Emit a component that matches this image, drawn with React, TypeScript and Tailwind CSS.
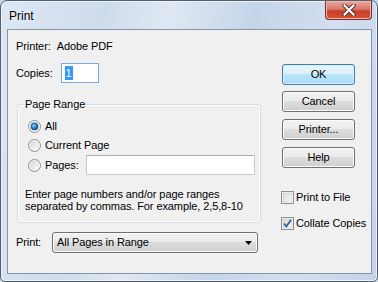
const btn =
  "flex h-[21px] w-[73px] items-center justify-center rounded-[3px] border border-[#707070] bg-[linear-gradient(#f2f2f2_0%,#ebebeb_45%,#dddddd_50%,#cfcfcf_100%)] shadow-[inset_0_0_0_1px_#fcfcfc] text-black";

function Radio({ checked }: { checked?: boolean }) {
  return (
    <svg width="13" height="13" viewBox="0 0 13 13" className="shrink-0">
      <defs>
        <linearGradient id="rbg" x1="0" y1="0" x2="1" y2="1">
          <stop offset="0" stopColor="#d4d4d4" />
          <stop offset="1" stopColor="#fcfcfc" />
        </linearGradient>
        <radialGradient id="rdot" cx="0.4" cy="0.35" r="0.7">
          <stop offset="0" stopColor="#8fd0f5" />
          <stop offset="0.55" stopColor="#2a7cc0" />
          <stop offset="1" stopColor="#0d3f75" />
        </radialGradient>
      </defs>
      <circle cx="6.5" cy="6.5" r="6" fill="#f4f4f4" stroke="#8e8f8f" />
      <circle cx="6.5" cy="6.5" r="4.5" fill="url(#rbg)" />
      {checked && <circle cx="6.5" cy="6.5" r="3.5" fill="url(#rdot)" stroke="#1c4f82" strokeWidth="0.8" />}
    </svg>
  );
}

function Check({ checked }: { checked?: boolean }) {
  return (
    <svg width="13" height="13" viewBox="0 0 13 13" className="shrink-0">
      <defs>
        <linearGradient id="cbg" x1="0" y1="0" x2="1" y2="1">
          <stop offset="0" stopColor="#d8d8d8" />
          <stop offset="1" stopColor="#f8f8f8" />
        </linearGradient>
      </defs>
      <rect x="0.5" y="0.5" width="12" height="12" fill="#fff" stroke="#8f8f8f" />
      <rect x="2" y="2" width="9" height="9" fill="url(#cbg)" stroke="#c2c2c2" strokeWidth="0.6" />
      {checked && (
        <path d="M3 6.5 L5.3 9.5 L10 2.8" fill="none" stroke="#3a5aa0" strokeWidth="1.8" strokeLinejoin="round" />
      )}
    </svg>
  );
}

export default function App() {
  return (
    <div className="h-[282px] w-[378px] bg-[#c9d7e8] font-['Liberation_Sans',Arial,sans-serif] text-[11px] leading-[13px] tracking-[-0.1px] text-black">
      <div className="flex h-full w-full flex-col rounded-t-[7px] rounded-b-[5px] border border-[#56606d] bg-[linear-gradient(100deg,#dce7f4_0%,#cfdcec_25%,#dfe8f3_40%,#c5d5e8_60%,#d3dff0_80%,#c4d4e7_100%)] shadow-[inset_0_0_0_1px_#e9f0f8]">
        <div className="flex h-[28px] shrink-0 items-start justify-between">
          <span className="mt-[8px] ml-[8px] text-[12px] leading-[14px] tracking-normal [text-shadow:0_0_6px_#ffffff]">
            Print
          </span>
          <div className="mr-[5px] flex h-[19px] w-[47px] items-center justify-center rounded-b-[4px] border border-t-0 border-[#7a2d24] bg-[linear-gradient(#e9a99a_0%,#d9786a_45%,#c7402c_55%,#d2502f_100%)] shadow-[inset_0_0_0_1px_#f0b8aa]">
            <svg width="14" height="12" viewBox="0 0 14 12">
              <path d="M2.5 1.5 L11.5 10.5 M11.5 1.5 L2.5 10.5" stroke="#4a2a26" strokeWidth="4" strokeLinecap="square" />
              <path d="M2.5 1.5 L11.5 10.5 M11.5 1.5 L2.5 10.5" stroke="#ffffff" strokeWidth="2.2" strokeLinecap="square" />
            </svg>
          </div>
        </div>
        <div className="mb-[7px] ml-[6px] mr-[5px] flex flex-1 border border-[#8395aa] bg-[#f0f0f0]">
          <div className="flex w-[253px] flex-col pl-[8px]">
            <div className="mt-[10px] flex">
              <span>Printer:</span>
              <span className="ml-[6px]">Adobe PDF</span>
            </div>
            <div className="mt-[10px] flex h-[20px] items-center">
              <span>Copies:</span>
              <div className="ml-[8px] flex h-[20px] w-[38px] items-center border border-[#7aa7d6] bg-white pl-[3px]">
                <span className="bg-[#3399ff] px-[1px] leading-[14px] text-white">1</span>
              </div>
            </div>
            <fieldset className="mt-[15px] ml-[1px] h-[125px] w-[244px] rounded-[3px] border border-[#d5dfe5] shadow-[inset_0_0_0_1px_#ffffff]">
              <legend className="ml-[6px] px-[1px]">Page Range</legend>
              <div className="mt-[9px] flex h-[13px] items-center pl-[10px]">
                <Radio checked />
                <span className="ml-[4px]">All</span>
              </div>
              <div className="mt-[6px] flex h-[13px] items-center pl-[10px]">
                <Radio />
                <span className="ml-[4px]">Current Page</span>
              </div>
              <div className="mt-[3px] flex h-[20px] items-center pl-[10px]">
                <Radio />
                <span className="ml-[4px]">Pages:</span>
                <div className="ml-[7px] h-[20px] w-[169px] border border-[#c5cbd2] border-t-[#abadb3] bg-white" />
              </div>
              <p className="mt-[13px] pl-[7px] leading-[12px]">
                Enter page numbers and/or page ranges
                <br />
                separated by commas. For example, 2,5,8-10
              </p>
            </fieldset>
            <div className="mt-[9px] flex h-[21px] items-center">
              <span>Print:</span>
              <div className="ml-[11px] flex h-[21px] w-[206px] items-center justify-between rounded-[3px] border border-[#707070] bg-[linear-gradient(#f2f2f2_0%,#ebebeb_45%,#dddddd_50%,#cfcfcf_100%)] pl-[4px] pr-[5px] shadow-[inset_0_0_0_1px_#fcfcfc]">
                <span>All Pages in Range</span>
                <svg width="7" height="4" viewBox="0 0 7 4">
                  <path d="M0 0 H7 L3.5 4 Z" fill="#000" />
                </svg>
              </div>
            </div>
          </div>
          <div className="ml-[20px] flex flex-col">
            <div className="mt-[34px] ml-[1px] flex h-[21px] w-[73px] items-center justify-center rounded-[3px] border border-[#3c7fb1] bg-[linear-gradient(#eaf6fd_0%,#d9f0fc_45%,#bee6fd_50%,#a7d9f5_100%)] shadow-[inset_0_0_0_1px_#d6f0fc]">
              OK
            </div>
            <div className={"mt-[6px] ml-[1px] " + btn}>Cancel</div>
            <div className={"mt-[7px] ml-[1px] " + btn}>Printer...</div>
            <div className={"mt-[7px] ml-[1px] " + btn}>Help</div>
            <div className="mt-[23px] flex h-[13px] items-center">
              <Check />
              <span className="ml-[2px]">Print to File</span>
            </div>
            <div className="mt-[13px] flex h-[13px] items-center">
              <Check checked />
              <span className="ml-[2px]">Collate Copies</span>
            </div>
          </div>
        </div>
      </div>
    </div>
  );
}
